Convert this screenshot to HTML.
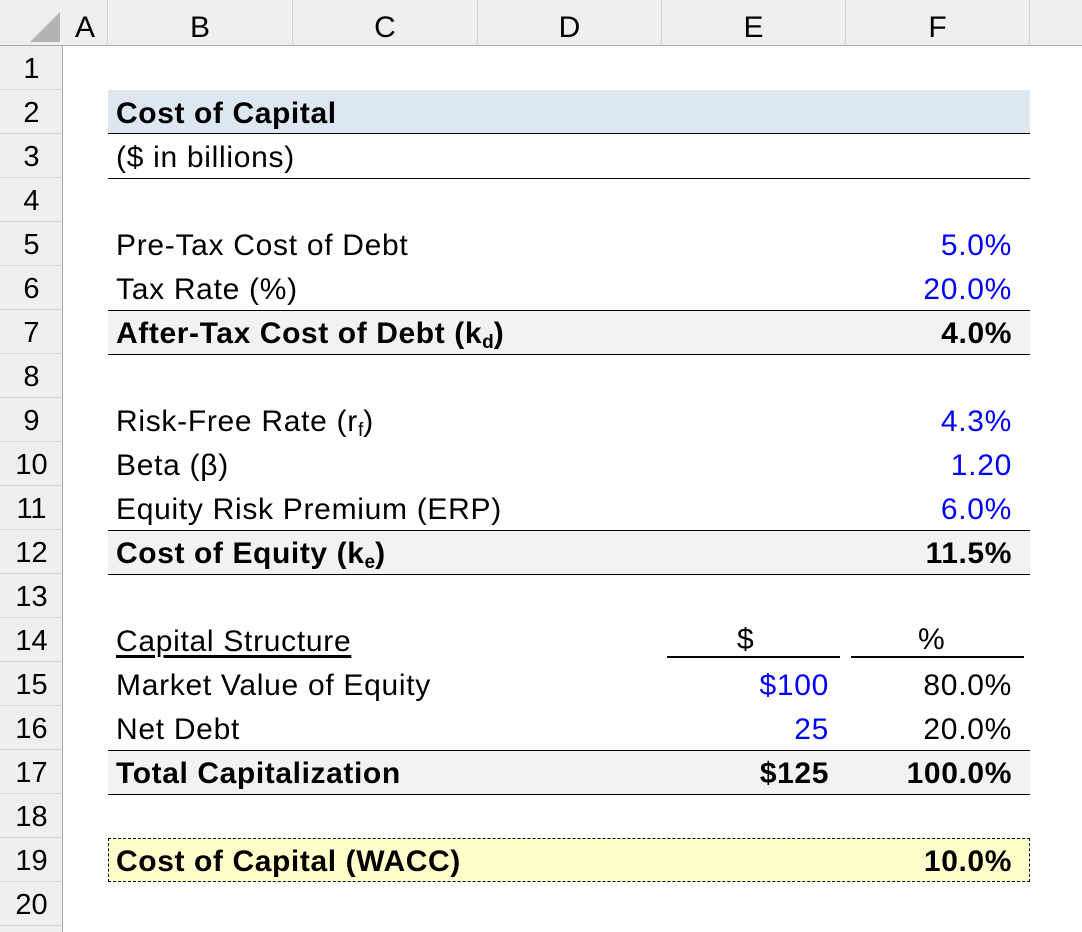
<!DOCTYPE html>
<html><head><meta charset="utf-8"><style>
*{margin:0;padding:0;box-sizing:border-box}
body{width:1082px;height:932px;background:#fff;font-family:"Liberation Sans",Arial,sans-serif;position:relative;overflow:hidden;color:#000}
.hdr{position:absolute;left:0;top:0;width:1082px;height:46px;background:#efefef;border-bottom:1px solid #ababab}
.col{position:absolute;top:0;height:46px;font-size:30px;text-align:center;line-height:56px;border-right:1px solid #d4d4d4}
.rh{position:absolute;left:0;top:46px;width:63px;height:886px;background:#efefef;border-right:1px solid #ababab}
.rn{position:absolute;left:0;width:63px;height:44px;font-size:29px;text-align:center;line-height:46px;border-bottom:1px solid #d4d4d4}
.t{position:absolute;font-size:30px;letter-spacing:0.7px;line-height:44px;white-space:nowrap}
.b{font-weight:bold;letter-spacing:0.6px}
.r{text-align:right}
.blue{color:#0000ff}
.band{position:absolute;left:108px;width:922px;height:44px}
sub{font-size:19px;vertical-align:-5px;line-height:0;letter-spacing:0}
</style></head><body>
<div class="hdr">
<svg style="position:absolute;left:28px;top:10px" width="34" height="34"><polygon points="32,2 32,32 2,32" fill="#b4b4b4"/></svg>
<div class="col" style="left:63px;width:45px">A</div>
<div class="col" style="left:108px;width:185px">B</div>
<div class="col" style="left:293px;width:185px">C</div>
<div class="col" style="left:478px;width:184px">D</div>
<div class="col" style="left:662px;width:184px">E</div>
<div class="col" style="left:846px;width:184px">F</div>
</div>
<div class="rh">
<div class="rn" style="top:0">1</div><div class="rn" style="top:44px">2</div><div class="rn" style="top:88px">3</div><div class="rn" style="top:132px">4</div><div class="rn" style="top:176px">5</div><div class="rn" style="top:220px">6</div><div class="rn" style="top:264px">7</div><div class="rn" style="top:308px">8</div><div class="rn" style="top:352px">9</div><div class="rn" style="top:396px">10</div><div class="rn" style="top:440px">11</div><div class="rn" style="top:484px">12</div><div class="rn" style="top:528px">13</div><div class="rn" style="top:572px">14</div><div class="rn" style="top:616px">15</div><div class="rn" style="top:660px">16</div><div class="rn" style="top:704px">17</div><div class="rn" style="top:748px">18</div><div class="rn" style="top:792px">19</div><div class="rn" style="top:836px">20</div>
</div>

<div class="band" style="top:90px;background:#dde7f1;border-bottom:1px solid #000"></div>
<div class="band" style="top:134px;border-bottom:1px solid #000;height:45px"></div>
<div class="band" style="top:310px;background:#f2f2f2;border-top:1px solid #000;border-bottom:1px solid #000;height:45px"></div>
<div class="band" style="top:530px;background:#f2f2f2;border-top:1px solid #000;border-bottom:1px solid #000;height:45px"></div>
<div class="band" style="top:750px;background:#f2f2f2;border-top:1px solid #000;border-bottom:1px solid #000;height:45px"></div>
<div class="band" style="top:838px;background:#ffffcc;border:1px dashed #000"></div>
<div style="position:absolute;left:667px;top:656px;width:173px;height:2px;background:#000"></div>
<div style="position:absolute;left:851px;top:656px;width:173px;height:2px;background:#000"></div>

<div class="t b" style="left:116px;top:92px">Cost of Capital</div>
<div class="t" style="left:116px;top:136px">($ in billions)</div>
<div class="t" style="left:116px;top:224px">Pre-Tax Cost of Debt</div>
<div class="t" style="left:116px;top:268px">Tax Rate (%)</div>
<div class="t b" style="left:116px;top:312px">After-Tax Cost of Debt (k<sub>d</sub>)</div>
<div class="t" style="left:116px;top:400px">Risk-Free Rate (r<sub>f</sub>)</div>
<div class="t" style="left:116px;top:444px">Beta (β)</div>
<div class="t" style="left:116px;top:488px">Equity Risk Premium (ERP)</div>
<div class="t b" style="left:116px;top:532px">Cost of Equity (k<sub>e</sub>)</div>
<div class="t" style="left:116px;top:620px;text-decoration:underline;text-underline-offset:4px">Capital Structure</div>
<div class="t" style="left:116px;top:664px">Market Value of Equity</div>
<div class="t" style="left:116px;top:708px">Net Debt</div>
<div class="t b" style="left:116px;top:752px">Total Capitalization</div>
<div class="t b" style="left:116px;top:840px">Cost of Capital (WACC)</div>

<div class="t r blue" style="right:70px;top:224px">5.0%</div>
<div class="t r blue" style="right:70px;top:268px">20.0%</div>
<div class="t r b" style="right:70px;top:312px">4.0%</div>
<div class="t r blue" style="right:70px;top:400px">4.3%</div>
<div class="t r blue" style="right:70px;top:444px">1.20</div>
<div class="t r blue" style="right:70px;top:488px">6.0%</div>
<div class="t r b" style="right:70px;top:532px">11.5%</div>
<div class="t" style="left:918px;top:618px">%</div>
<div class="t" style="left:737px;top:618px">$</div>
<div class="t r blue" style="right:253px;top:664px">$100</div>
<div class="t r" style="right:70px;top:664px">80.0%</div>
<div class="t r blue" style="right:253px;top:708px">25</div>
<div class="t r" style="right:70px;top:708px">20.0%</div>
<div class="t r b" style="right:253px;top:752px">$125</div>
<div class="t r b" style="right:70px;top:752px">100.0%</div>
<div class="t r b" style="right:70px;top:840px">10.0%</div>
</body></html>
